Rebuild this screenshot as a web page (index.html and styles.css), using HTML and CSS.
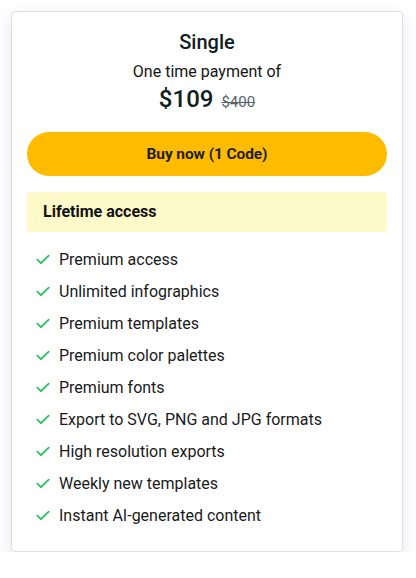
FILE: index.html
```html
<!DOCTYPE html>
<html>
<head>
<meta charset="utf-8">
<link rel="stylesheet" href="styles.css">
</head>
<body>
<div class="card">
  <h2 class="title">Single</h2>
  <p class="subtitle">One time payment of</p>
  <div class="price"><span class="now">$109</span><span class="old">$400</span></div>
  <button class="buy">Buy now (1 Code)</button>
  <div class="access">Lifetime access</div>
  <ul class="features">
    <li><svg class="check" viewBox="0 0 16 12"><path d="M1.5 6.2 L5.6 10.2 L14.5 1.5"/></svg>Premium access</li>
    <li><svg class="check" viewBox="0 0 16 12"><path d="M1.5 6.2 L5.6 10.2 L14.5 1.5"/></svg>Unlimited infographics</li>
    <li><svg class="check" viewBox="0 0 16 12"><path d="M1.5 6.2 L5.6 10.2 L14.5 1.5"/></svg>Premium templates</li>
    <li><svg class="check" viewBox="0 0 16 12"><path d="M1.5 6.2 L5.6 10.2 L14.5 1.5"/></svg>Premium color palettes</li>
    <li><svg class="check" viewBox="0 0 16 12"><path d="M1.5 6.2 L5.6 10.2 L14.5 1.5"/></svg>Premium fonts</li>
    <li><svg class="check" viewBox="0 0 16 12"><path d="M1.5 6.2 L5.6 10.2 L14.5 1.5"/></svg>Export to SVG, PNG and JPG formats</li>
    <li><svg class="check" viewBox="0 0 16 12"><path d="M1.5 6.2 L5.6 10.2 L14.5 1.5"/></svg>High resolution exports</li>
    <li><svg class="check" viewBox="0 0 16 12"><path d="M1.5 6.2 L5.6 10.2 L14.5 1.5"/></svg>Weekly new templates</li>
    <li><svg class="check" viewBox="0 0 16 12"><path d="M1.5 6.2 L5.6 10.2 L14.5 1.5"/></svg>Instant AI-generated content</li>
  </ul>
</div>
</body>
</html>
```
FILE: styles.css
```css
html, body {
  margin: 0;
  padding: 0;
  background: #ffffff;
}
body {
  font-family: Roboto, "Liberation Sans", sans-serif;
  color: #1b1f1f;
  padding: 11px 13px 0 11px;
}
.card {
  box-sizing: border-box;
  width: 392px;
  border: 1px solid #dedde8;
  border-radius: 4px;
  background: #fff;
  box-shadow: 0 6px 18px rgba(0, 0, 0, 0.10);
  padding: 16px 15px 20px 15px;
}
.title {
  margin: 0;
  text-align: center;
  font-size: 20px;
  line-height: 28px;
  font-weight: 500;
  color: #0f2020;
}
.subtitle {
  margin: 4px 0 0 0;
  text-align: center;
  font-size: 16px;
  line-height: 24px;
  color: #141414;
}
.price {
  display: flex;
  justify-content: center;
  align-items: baseline;
  gap: 8px;
  height: 30px;
  line-height: 30px;
}
.now {
  font-size: 24px;
  font-weight: 500;
  color: #0f2020;
}
.old {
  font-size: 15px;
  color: #5b6466;
  text-decoration: line-through;
}
.buy {
  display: block;
  width: 100%;
  height: 44px;
  margin-top: 18px;
  border: none;
  border-radius: 22px;
  background: #ffbb00;
  color: #1f1f1f;
  font-family: Roboto, "Liberation Sans", sans-serif;
  font-size: 15.5px;
  font-weight: 700;
  letter-spacing: -0.1px;
}
.access {
  margin-top: 16px;
  height: 40px;
  line-height: 40px;
  border-radius: 4px;
  background: #fef9c9;
  padding-left: 16px;
  font-size: 16px;
  font-weight: 700;
  color: #111;
}
.features {
  list-style: none;
  margin: 11px 0 0 0;
  padding: 0 0 0 9px;
}
.features li {
  display: flex;
  align-items: center;
  height: 32px;
  font-size: 16px;
  color: #1a1a1a;
}
.check {
  width: 14px;
  height: 11px;
  margin-right: 9px;
  fill: none;
  stroke: #1fc15a;
  stroke-width: 2;
  stroke-linecap: round;
  stroke-linejoin: round;
}
```
